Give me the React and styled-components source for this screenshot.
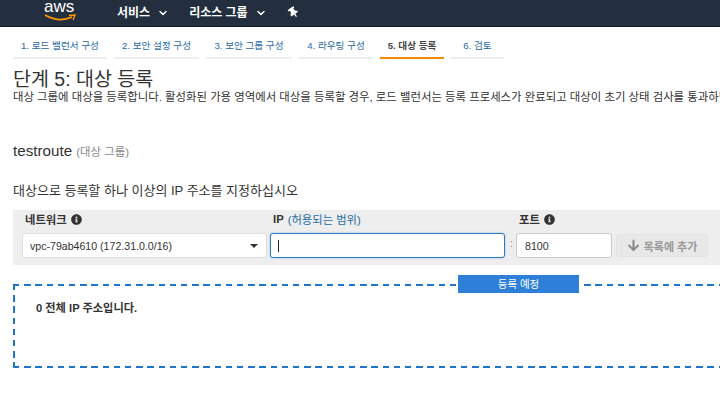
import React from 'react'
import styled, { createGlobalStyle } from 'styled-components'
import { FaInfoCircle, FaArrowDown, FaThumbtack } from 'react-icons/fa'
import { ChevronDown } from 'lucide-react'

const tabs = [
  { label: '1. 로드 밸런서 구성', width: 94 },
  { label: '2. 보안 설정 구성', width: 85 },
  { label: '3. 보안 그룹 구성', width: 86 },
  { label: '4. 라우팅 구성', width: 74 },
  { label: '5. 대상 등록', width: 64, active: true },
  { label: '6. 검토', width: 53 },
]

function App() {
  return (
    <Page>
      <GlobalStyle />
      <TopBar>
        <Logo>
          <LogoWord>aws</LogoWord>
          <LogoSmile viewBox="0 0 32 8">
            <path d="M1 1 Q15 9 28 3" fill="none" stroke="#f90" strokeWidth="1.6" />
            <path d="M25 1.5 L31 1 L29 6" fill="none" stroke="#f90" strokeWidth="1.3" />
          </LogoSmile>
        </Logo>
        <NavItem>서비스 <ChevronDown size={12} strokeWidth={3} /></NavItem>
        <NavItem>리소스 그룹 <ChevronDown size={12} strokeWidth={3} /></NavItem>
        <Pin><FaThumbtack size={11} /></Pin>
      </TopBar>

      <Tabs>
        {tabs.map(tab => (
          <Tab key={tab.label} $width={tab.width} $active={tab.active}>{tab.label}</Tab>
        ))}
      </Tabs>

      <Content>
        <Title>단계 5: 대상 등록</Title>
        <Description>
          대상 그룹에 대상을 등록합니다. 활성화된 가용 영역에서 대상을 등록할 경우, 로드 밸런서는 등록 프로세스가 완료되고 대상이 초기 상태 검사를 통과하면 대상으로 요청을 라우팅하기 시작합니다.
        </Description>
        <GroupName>testroute <small>(대상 그룹)</small></GroupName>
        <Lead>대상으로 등록할 하나 이상의 IP 주소를 지정하십시오</Lead>

        <FormPanel>
          <Field $width={245}>
            <Label>네트워크 <FaInfoCircle size={11} /></Label>
            <SelectBox>
              vpc-79ab4610 (172.31.0.0/16)
              <Caret />
            </SelectBox>
          </Field>
          <Field $width={235}>
            <Label>IP <LabelLink>(허용되는 범위)</LabelLink></Label>
            <IpInput><TextCursor /></IpInput>
          </Field>
          <Colon>:</Colon>
          <Field $width={96}>
            <Label>포트 <FaInfoCircle size={11} /></Label>
            <PortInput>8100</PortInput>
          </Field>
          <AddButton><FaArrowDown size={13} /> 목록에 추가</AddButton>
        </FormPanel>

        <PendingBox>
          <PendingBadge>등록 예정</PendingBadge>
          <Total>0 전체 IP 주소입니다.</Total>
        </PendingBox>
      </Content>
    </Page>
  )
}

const GlobalStyle = createGlobalStyle`
  html, body {
    margin: 0;
    background: #fff;
    overflow: hidden;
  }
  * {
    box-sizing: border-box;
  }
`

const Page = styled.div`
  width: 720px;
  height: 404px;
  overflow: hidden;
  color: #333;
  font-family: "Liberation Sans", "Noto Sans CJK KR", sans-serif;
  font-size: 11px;
`

const TopBar = styled.header`
  height: 27px;
  background: #232f3e;
  border-bottom: 1px solid #10151c;
  display: flex;
  align-items: center;
  padding-left: 44px;
  color: #fff;
`

const Logo = styled.div`
  width: 32px;
  height: 26px;
  margin-right: 41px;
`

const LogoWord = styled.span`
  display: block;
  font-size: 17px;
  line-height: 14px;
`

const LogoSmile = styled.svg`
  display: block;
  width: 32px;
  height: 8px;
`

const NavItem = styled.div`
  display: flex;
  align-items: center;
  gap: 7px;
  font-size: 12px;
  font-weight: bold;
  margin-right: 20px;
  margin-top: -3px;
  & svg {
    margin-top: 2px;
  }
`

const Pin = styled.div`
  display: flex;
  margin-top: -2px;
  margin-left: 1px;
  transform: rotate(-35deg);
`

const Tabs = styled.nav`
  display: flex;
  gap: 7px;
  padding: 8px 0 0 13px;
`

const Tab = styled.div`
  width: ${props => props.$width}px;
  height: 24px;
  line-height: 22px;
  text-align: center;
  white-space: nowrap;
  font-size: 9.6px;
  color: ${props => props.$active ? '#444' : '#1f6aa5'};
  font-weight: ${props => props.$active ? 'bold' : 'normal'};
  border-bottom: 2px solid ${props => props.$active ? '#f08a00' : '#eee'};
`

const Content = styled.main`
  padding-left: 13px;
`

const Title = styled.h1`
  margin: 9px 0 0;
  font-size: 19.5px;
  line-height: 22px;
  font-weight: normal;
  color: #333;
`

const Description = styled.p`
  margin: 0;
  font-size: 11.4px;
  line-height: 14px;
  white-space: nowrap;
`

const GroupName = styled.h2`
  margin: 37px 0 0;
  font-size: 15.2px;
  line-height: 20px;
  font-weight: normal;
  & small {
    font-size: 11.4px;
    color: #888;
  }
`

const Lead = styled.p`
  margin: 21px 0 0;
  font-size: 13px;
  line-height: 16px;
`

const FormPanel = styled.section`
  margin-top: 11px;
  width: 720px;
  height: 55px;
  background: #eee;
  padding: 2px 0 0 9px;
  display: flex;
  align-items: flex-start;
`

const Field = styled.div`
  width: ${props => props.$width}px;
  margin-right: 3px;
`

const Label = styled.label`
  display: flex;
  align-items: center;
  gap: 4px;
  height: 14px;
  margin: 0 0 7px 3px;
  font-size: 11.3px;
  font-weight: bold;
  color: #333;
`

const LabelLink = styled.span`
  color: #1f6aa5;
  font-weight: normal;
`

const inputBox = `
  height: 25px;
  background: #fff;
  border-radius: 3px;
  font-size: 10.6px;
  display: flex;
  align-items: center;
`

const SelectBox = styled.div`
  ${inputBox}
  border: 1px solid #ddd;
  padding: 0 8px 0 7px;
  justify-content: space-between;
`

const Caret = styled.span`
  width: 0;
  height: 0;
  border-left: 4px solid transparent;
  border-right: 4px solid transparent;
  border-top: 4px solid #333;
`

const IpInput = styled.div`
  ${inputBox}
  border: 1px solid #2b7bc4;
  box-shadow: 0 0 2px rgba(43, 123, 196, 0.5);
  padding-left: 7px;
`

const TextCursor = styled.span`
  width: 1px;
  height: 12px;
  background: #222;
`

const Colon = styled.span`
  width: 7px;
  margin: 27px 1px 0 0;
  color: #777;
  font-size: 10px;
  line-height: 10px;
  text-align: center;
`

const PortInput = styled.div`
  ${inputBox}
  border: 1px solid #ccc;
  padding-left: 8px;
`

const AddButton = styled.div`
  width: 92px;
  height: 23px;
  margin: 22px 0 0 1px;
  background: #e8e8e8;
  border: 1px solid #e2e2e2;
  border-radius: 3px;
  color: #999;
  font-size: 11px;
  font-weight: bold;
  display: flex;
  align-items: center;
  justify-content: center;
  gap: 4px;
  & svg {
    color: #888;
  }
`

const dash = '#1f75c9'

const PendingBox = styled.section`
  margin-top: 19px;
  width: 720px;
  height: 84px;
  position: relative;
  padding: 17px 0 0 23px;
  background:
    repeating-linear-gradient(90deg, ${dash} 0 6.5px, transparent 6.5px 11.2px) top left / 100% 2px no-repeat,
    repeating-linear-gradient(90deg, ${dash} 0 6.5px, transparent 6.5px 11.2px) bottom left / 100% 2px no-repeat,
    repeating-linear-gradient(180deg, ${dash} 0 6.5px, transparent 6.5px 11.2px) top left / 2px 100% no-repeat;
`

const PendingBadge = styled.div`
  position: absolute;
  top: -9px;
  left: 445px;
  width: 121px;
  height: 18px;
  background: #2d7fd8;
  color: #fff;
  font-size: 10.5px;
  line-height: 18px;
  text-align: center;
`

const Total = styled.div`
  font-size: 11.2px;
  font-weight: bold;
  line-height: 14px;
`

export default App
